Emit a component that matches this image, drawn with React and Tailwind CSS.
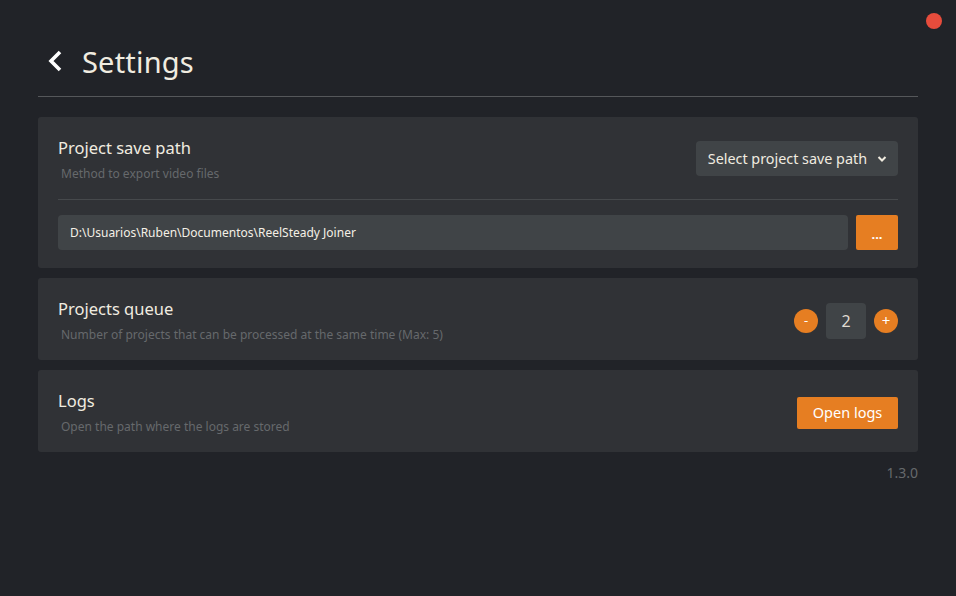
import React, { useState } from 'react'

function Card({ children }) {
  return <div className="bg-[#303236] rounded-[3px] px-5 pt-[19px] pb-[16px]">{children}</div>
}

function Heading({ title, sub }) {
  return (
    <div>
      <div className="text-[16.5px] leading-6">{title}</div>
      <div className="text-[12px] leading-[18px] text-[#66696c] mt-[5px] ml-[3px]">{sub}</div>
    </div>
  )
}

export default function App() {
  const [queue, setQueue] = useState(2)

  return (
    <div className="w-[956px] h-[596px] bg-[#212328] relative overflow-hidden text-[#f0ece0]" style={{ fontFamily: '"Noto Sans", "Open Sans", sans-serif' }}>
      {/* window close dot */}
      <div className="absolute top-[13px] right-[14px] w-4 h-4 rounded-full bg-[#e74c3c]" />

      <div className="px-[38px] pt-[38px]">
        {/* Header */}
        <div className="flex items-center h-[46px] pl-[9px]">
          <svg width="18" height="24" viewBox="0 0 18 24" className="mr-[17px]">
            <path d="M13 3 L4 12 L13 21" fill="none" stroke="#ffffff" strokeWidth="3.6" strokeLinecap="butt" strokeLinejoin="miter" />
          </svg>
          <h1 className="text-[29px] leading-none tracking-[0.2px]">Settings</h1>
        </div>
        <div className="h-px bg-[#55575a] mt-[12px] mb-5" />

        <div className="flex flex-col gap-[10px]">
          {/* Project save path */}
          <div className="bg-[#303236] rounded-[3px] px-5 pt-[19px] pb-[18px]">
            <div className="flex items-start justify-between">
              <Heading title="Project save path" sub="Method to export video files" />
              <button className="mt-[5px] h-[35px] pl-3 pr-[11px] bg-[#404447] rounded-[4px] flex items-center gap-[10px] text-[14.35px]">
                Select project save path
                <svg width="10" height="8" viewBox="0 0 10 8">
                  <path d="M1.5 2 L5 5.5 L8.5 2" fill="none" stroke="#f0ece0" strokeWidth="2" />
                </svg>
              </button>
            </div>
            <div className="h-px bg-[#46494c] mt-[16px] mb-[15px]" />
            <div className="flex gap-2">
              <div className="flex-1 h-[35px] bg-[#404447] rounded-[4px] flex items-center px-3 text-[12px] text-[#f4f0e6]">
                D:\Usuarios\Ruben\Documentos\ReelSteady Joiner
              </div>
              <button className="w-[42px] h-[35px] bg-[#e67e22] rounded-[2px] text-white text-[13px] font-bold leading-none pt-[4px]">...</button>
            </div>
          </div>

          {/* Projects queue */}
          <Card>
            <div className="flex items-center justify-between">
              <Heading title="Projects queue" sub="Number of projects that can be processed at the same time (Max: 5)" />
              <div className="flex items-center gap-2">
                <button onClick={() => setQueue(q => Math.max(1, q - 1))} className="w-6 h-6 rounded-full bg-[#e67e22] text-white text-[13px] leading-none flex items-center justify-center">-</button>
                <div className="w-10 h-9 bg-[#404447] rounded-[4px] flex items-center justify-center text-[16px] text-[#e0dcd2]">{queue}</div>
                <button onClick={() => setQueue(q => Math.min(5, q + 1))} className="w-6 h-6 rounded-full bg-[#e67e22] text-white text-[15px] leading-none flex items-center justify-center">+</button>
              </div>
            </div>
          </Card>

          {/* Logs */}
          <Card>
            <div className="flex items-center justify-between">
              <Heading title="Logs" sub="Open the path where the logs are stored" />
              <button className="h-8 w-[101px] bg-[#e67e22] rounded-[2px] text-white text-[14.5px]">Open logs</button>
            </div>
          </Card>
        </div>

        <div className="text-right text-[14px] leading-[21px] text-[#66696c] mt-[10px]">1.3.0</div>
      </div>
    </div>
  )
}
